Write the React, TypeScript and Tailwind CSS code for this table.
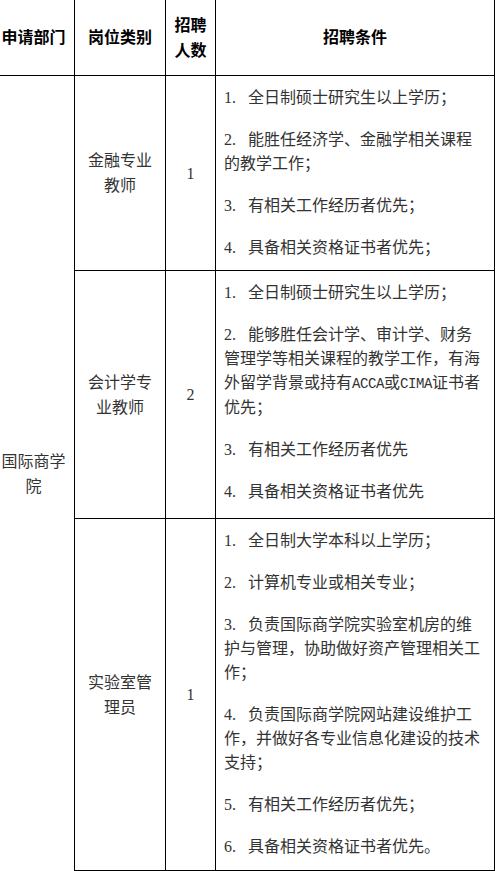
import type { ReactNode } from "react";

type Item = { n: string; lines: ReactNode[] };
type Row = { title: string; count: string; h: string; items: Item[] };

const Latin = ({ children }: { children: ReactNode }) => (
  <span className="font-['Liberation_Mono',monospace] text-[14px] tracking-[-0.4px]">{children}</span>
);

const ROWS: Row[] = [
  {
    title: "金融专业教师",
    count: "1",
    h: "h-[195px]",
    items: [
      { n: "1.", lines: ["全日制硕士研究生以上学历；"] },
      { n: "2.", lines: ["能胜任经济学、金融学相关课程", "的教学工作；"] },
      { n: "3.", lines: ["有相关工作经历者优先；"] },
      { n: "4.", lines: ["具备相关资格证书者优先；"] },
    ],
  },
  {
    title: "会计学专业教师",
    count: "2",
    h: "h-[248px]",
    items: [
      { n: "1.", lines: ["全日制硕士研究生以上学历；"] },
      {
        n: "2.",
        lines: [
          "能够胜任会计学、审计学、财务",
          "管理学等相关课程的教学工作，有海",
          <>
            外留学背景或持有<Latin>ACCA</Latin>或<Latin>CIMA</Latin>证书者
          </>,
          "优先；",
        ],
      },
      { n: "3.", lines: ["有相关工作经历者优先"] },
      { n: "4.", lines: ["具备相关资格证书者优先"] },
    ],
  },
  {
    title: "实验室管理员",
    count: "1",
    h: "h-[352px]",
    items: [
      { n: "1.", lines: ["全日制大学本科以上学历；"] },
      { n: "2.", lines: ["计算机专业或相关专业；"] },
      { n: "3.", lines: ["负责国际商学院实验室机房的维", "护与管理，协助做好资产管理相关工", "作；"] },
      { n: "4.", lines: ["负责国际商学院网站建设维护工", "作，并做好各专业信息化建设的技术", "支持；"] },
      { n: "5.", lines: ["有相关工作经历者优先；"] },
      { n: "6.", lines: ["具备相关资格证书者优先。"] },
    ],
  },
];

const cell = "border-r border-b border-black";

export default function App() {
  return (
    <div className="w-[495px] bg-white font-['Liberation_Serif','Noto_Sans_CJK_SC',serif] text-[16px] text-[#333]">
      <div className="grid grid-cols-[75px_91px_50px_279px] grid-rows-[76px_auto_auto_auto]">
        {/* Header */}
        <div className={`${cell} flex items-center justify-center pr-[7px] font-bold text-black leading-[25px]`}>
          申请部门
        </div>
        <div className={`${cell} flex items-center justify-center px-[6px] font-bold text-black leading-[25px]`}>
          岗位类别
        </div>
        <div className={`${cell} flex items-center justify-center px-[4px] text-center font-bold text-black leading-[25px]`}>
          招聘人数
        </div>
        <div className={`${cell} flex items-center justify-center font-bold text-black leading-[25px]`}>
          招聘条件
        </div>

        {/* Department */}
        <div className="row-span-3 flex items-center justify-center border-r border-black pr-[7px] text-center leading-[25px]">
          国际商学院
        </div>

        {ROWS.map((row) => (
          <div key={row.title} className="contents">
            <div className={`${cell} ${row.h} flex items-center justify-center px-[6px] text-center leading-[25px]`}>
              {row.title}
            </div>
            <div className={`${cell} ${row.h} flex items-center justify-center leading-[25px]`}>
              {row.count}
            </div>
            <div className={`${cell} ${row.h} flex flex-col gap-[18px] pl-[8px] pt-[10px]`}>
              {row.items.map((item) => (
                <div key={item.n}>
                  {item.lines.map((line, i) => (
                    <div key={i} className="whitespace-nowrap leading-[24px]">
                      {i === 0 && <span className="inline-block w-[24px]">{item.n}</span>}
                      {line}
                    </div>
                  ))}
                </div>
              ))}
            </div>
          </div>
        ))}
      </div>
    </div>
  );
}
